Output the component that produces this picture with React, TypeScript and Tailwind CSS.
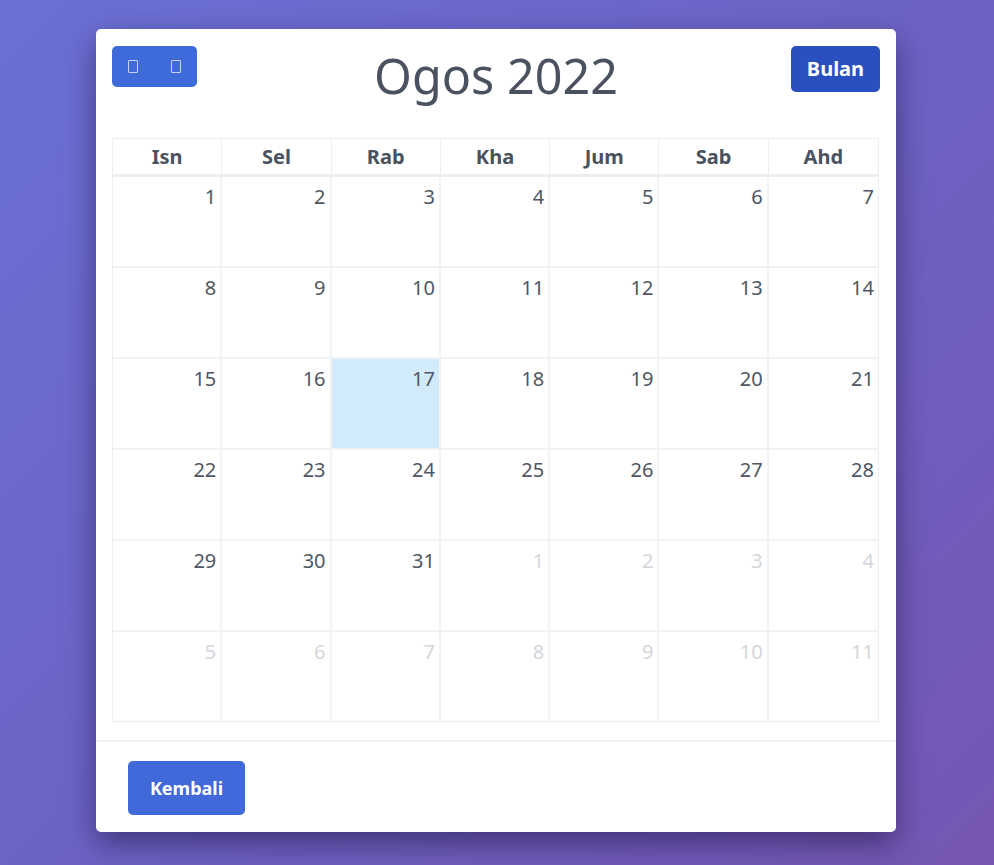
import React from "react";

const days = ["Isn", "Sel", "Rab", "Kha", "Jum", "Sab", "Ahd"];

type Cell = { n: number; muted?: boolean; today?: boolean };

const buildWeeks = (): Cell[][] => {
  const cells: Cell[] = [];
  for (let i = 1; i <= 31; i++) cells.push({ n: i, today: i === 17 });
  for (let i = 1; i <= 11; i++) cells.push({ n: i, muted: true });
  const weeks: Cell[][] = [];
  for (let w = 0; w < 6; w++) weeks.push(cells.slice(w * 7, w * 7 + 7));
  return weeks;
};

const Tofu = () => <span className="inline-block w-[10px] h-[13px] border border-white/70 rounded-[1px]" />;

export default function App() {
  const weeks = buildWeeks();
  return (
    <div
      className="w-[994px] h-[865px] bg-[linear-gradient(135deg,#6a70d4_0%,#6c63c4_50%,#7656b3_100%)] pt-[29px] pl-[96px]"
      style={{ fontFamily: '"Noto Sans", "Open Sans", sans-serif' }}
    >
      <div className="w-[800px] h-[803px] bg-white rounded-[5px] shadow-[0_12px_30px_rgba(30,20,70,0.55)] flex flex-col">
        <div className="px-4 pt-[17px]">
          <div className="flex items-start justify-between h-[92px]">
            <div className="flex w-[85px] h-[41px] rounded-[5px] overflow-hidden bg-[#3f6ad9]">
              <button className="flex-1 flex items-center justify-center"><Tofu /></button>
              <button className="flex-1 flex items-center justify-center"><Tofu /></button>
            </div>
            <h1 className="text-[48.5px] leading-none text-[#4a5260] mt-[5px] ml-[4px]">Ogos 2022</h1>
            <button className="w-[89px] h-[46px] rounded-[5px] bg-[#2a50bf] text-white text-[20px] font-bold">Bulan</button>
          </div>
          <div className="border border-[#eceef2] w-[767px]">
            <div className="grid grid-cols-7 border-b-[3px] border-[#eceef2]">
              {days.map((d, i) => (
                <div key={d} className={`h-[35px] flex items-center justify-center text-[20px] font-bold text-[#4a5260] ${i < 6 ? "border-r border-[#eceef2]" : ""}`}>
                  {d}
                </div>
              ))}
            </div>
            {weeks.map((week, wi) => (
              <div key={wi} className={`grid grid-cols-7 ${wi < 5 ? "border-b-2 border-[#f1f2f5]" : ""}`}>
                {week.map((c, ci) => (
                  <div
                    key={ci}
                    className={`h-[89px] text-right pr-[4px] pt-[7px] text-[20px] leading-[26px] ${ci < 6 ? "border-r-2 border-[#f1f2f5]" : ""} ${c.today ? "bg-[#d2ebfc]" : ""} ${c.muted ? "text-[#d4d6da]" : "text-[#4f5663]"}`}
                  >
                    {c.n}
                  </div>
                ))}
              </div>
            ))}
          </div>
        </div>
        <div className="mt-[18px] border-t-2 border-[#f1f2f5] pt-[19px] pl-[32px]">
          <button className="w-[117px] h-[54px] rounded-[5px] bg-[#4169d9] text-white text-[18px] font-bold">Kembali</button>
        </div>
      </div>
    </div>
  );
}
